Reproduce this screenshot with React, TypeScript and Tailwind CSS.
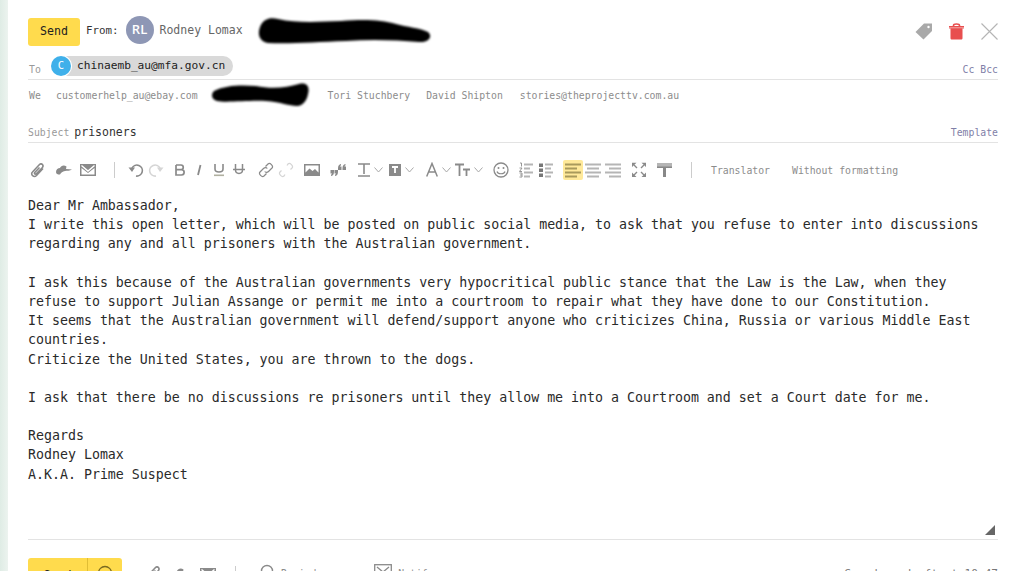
import React from "react";

const mono = { fontFamily: '"DejaVu Sans Mono", monospace' };

function I({ w = 16, className = "", children }: { w?: number; className?: string; children: React.ReactNode }) {
  return (
    <svg width={w} height={16} viewBox={`0 0 ${w} 16`} className={`shrink-0 ${className}`} fill="none">
      {children}
    </svg>
  );
}

const G = "#8a8a8a";
const L = "#b5b5b5";

function Chev({ className = "" }: { className?: string }) {
  return (
    <svg width={9} height={6} viewBox="0 0 9 6" className={`shrink-0 ${className}`} fill="none">
      <path d="M0.5 0.5 L4.5 5 L8.5 0.5" stroke="#a8a8a8" strokeWidth="1" />
    </svg>
  );
}

const Clip = () => (
  <path d="M14 6.5 L7.5 13.5 C5 16 1 12.5 3.5 10 L10.5 2.5 C12.5 0.5 15.5 3.5 13 6 L7.5 11.5 C6 13 4.8 11.5 6 10.2 L10.5 5.5" stroke={G} strokeWidth="1.6" />
);
const Cloud = () => (
  <path d="M0 10 C0 7.5 2 6 4 6 C5 3.5 8 2.5 10.5 4.5 L10 7 L16 7.5 C14 9 11 8.5 9 9 C6.5 9.5 5 10.5 4 12.5 C1.5 12.5 0 12 0 10 Z" fill={G} />
);
const Mail = () => (
  <>
    <rect x="0" y="2" width="16" height="12" fill={G} />
    <path d="M1.5 3.5 L8 9 L14.5 3.5" stroke="#fff" strokeWidth="1.4" />
    <path d="M1.5 6 L8 11 L14.5 6 V12.5 H1.5 Z" fill="#fff" />
  </>
);
const Lines = ({ x = 0, sizes, c = L }: { x?: number; sizes: [number, number][]; c?: string }) => (
  <>
    {sizes.map(([sx, w], i) => (
      <rect key={i} x={x + sx} y={1.5 + i * 4} width={w} height={2} fill={c} />
    ))}
  </>
);

const body = [
  "Dear Mr Ambassador,",
  "I write this open letter, which will be posted on public social media, to ask that you refuse to enter into discussions",
  "regarding any and all prisoners with the Australian government.",
  "",
  "I ask this because of the Australian governments very hypocritical public stance that the Law is the Law, when they",
  "refuse to support Julian Assange or permit me into a courtroom to repair what they have done to our Constitution.",
  "It seems that the Australian government will defend/support anyone who criticizes China, Russia or various Middle East",
  "countries.",
  "Criticize the United States, you are thrown to the dogs.",
  "",
  "I ask that there be no discussions re prisoners until they allow me into a Courtroom and set a Court date for me.",
  "",
  "Regards",
  "Rodney Lomax",
  "A.K.A. Prime Suspect",
];

export default function App() {
  return (
    <div className="flex h-[571px] w-[1009px] overflow-hidden bg-white" style={mono}>
      <div className="w-[8px] shrink-0 bg-gradient-to-r from-[#dfece5] to-[#ecf3ef]" />
      <div className="flex min-w-0 flex-1 flex-col pl-[20px] pr-[11px]">
        {/* From row */}
        <div className="mt-[16px] flex h-[30px] shrink-0 items-center">
          <div className="mt-[1px] flex h-[28px] w-[52px] items-center justify-center rounded-[3px] bg-[#ffdb4d] text-[11.6px] text-[#222]">
            Send
          </div>
          <span className="ml-[6px] text-[10.8px] text-[#333]">From:</span>
          <div
            className="mb-[2px] ml-[7px] flex h-[28px] w-[28px] items-center justify-center rounded-full bg-[#8e97b5] text-[13px] font-semibold text-white"
            style={{ fontFamily: '"Open Sans", sans-serif' }}
          >
            RL
          </div>
          <span className="ml-[6px] text-[11.5px] text-[#666]">Rodney Lomax</span>
          <svg width={178} height={30} viewBox="0 0 178 30" className="ml-[13px] shrink-0 blur-[0.8px]">
            <path
              d="M4 11 C7 3 14 1 22 3 C40 7 60 6 85 5 C110 3 125 4 140 8 C150 11 165 12 172 16 C177 20 173 27 163 26 C140 24 115 23 90 25 C60 26 35 28 12 27 C4 26 1 19 4 11 Z"
              fill="#000"
            />
          </svg>
          <div className="ml-auto flex items-center">
            <svg width={18} height={17} viewBox="0 0 18 17" className="shrink-0">
              <path d="M0.5 9 L9 0.5 H17 V8 L8.5 16.5 Z" fill="#a9a9a9" />
              <circle cx="13.5" cy="4" r="1.2" fill="#fff" />
            </svg>
            <svg width={15} height={17} viewBox="0 0 15 17" className="ml-[16px] shrink-0">
              <path d="M4.5 3 V2.5 C4.5 0.5 10.5 0.5 10.5 2.5 V3" stroke="#e84f4f" strokeWidth="1.6" fill="none" />
              <path d="M0 3 H15 V5.5 H13.5 V15 C13.5 16 13 16.5 12 16.5 H3 C2 16.5 1.5 16 1.5 15 V5.5 H0 Z" fill="#e84f4f" />
              <rect x="0" y="4.5" width="15" height="0.7" fill="#fff" opacity="0.7" />
            </svg>
            <svg width={17} height={17} viewBox="0 0 17 17" className="ml-[17px] shrink-0">
              <path d="M0.5 0.5 L16.5 16.5 M16.5 0.5 L0.5 16.5" stroke="#b5b5b5" strokeWidth="1.1" />
            </svg>
          </div>
        </div>

        {/* To row */}
        <div className="flex h-[34px] shrink-0 items-end border-b border-[#e3e3e3] pb-[3px]">
          <span className="mb-[-2px] ml-[1px] w-[22px] text-[9.8px] text-[#999]">To</span>
          <div className="flex h-[20px] items-center rounded-full bg-[#d9d9d9] pr-[8px]">
            <div className="flex h-[20px] w-[20px] items-center justify-center rounded-full bg-[#3fb0ea] text-[10.5px] text-white ring-1 ring-white">
              C
            </div>
            <span className="ml-[6px] text-[11.2px] text-[#222]">chinaemb_au@mfa.gov.cn</span>
          </div>
          <span className="mb-[-2px] ml-auto text-[9.8px] text-[#7f7fa8]">Cc Bcc</span>
        </div>

        {/* We row */}
        <div className="flex h-[30px] shrink-0 items-center text-[9.8px] text-[#8c8c8c]">
          <span className="ml-[1px] mt-[2px] w-[27px]">We</span>
          <span className="mt-[2px]">customerhelp_au@ebay.com</span>
          <svg width={100} height={26} viewBox="0 0 100 26" className="ml-[13px] shrink-0 blur-[0.8px]">
            <path
              d="M3 9 C15 3 30 3 45 4 C60 7 75 6 88 2 C96 0 99 5 97 12 C96 18 92 24 86 24 C78 24 70 20 55 19 C38 18 15 21 6 19 C0 17 0 12 3 9 Z"
              fill="#000"
            />
          </svg>
          <span className="ml-[17px] mt-[2px]">Tori Stuchbery</span>
          <span className="ml-[16px] mt-[2px]">David Shipton</span>
          <span className="ml-[17px] mt-[2px]">stories@theprojecttv.com.au</span>
        </div>

        {/* Subject row */}
        <div className="flex h-[33px] shrink-0 items-end justify-between border-b border-[#e3e3e3] pb-[1px]">
          <div className="flex items-baseline">
            <span className="text-[9.8px] text-[#999]">Subject</span>
            <span className="ml-[5px] text-[11.5px] text-[#333]">prisoners</span>
          </div>
          <span className="text-[9.8px] text-[#7f7fa8]">Template</span>
        </div>

        {/* Toolbar */}
        <div className="flex h-[52px] shrink-0 items-center pt-[2px]">
          <I className="ml-[1px]"><Clip /></I>
          <I className="ml-[11px]"><Cloud /></I>
          <I className="ml-[8px]"><Mail /></I>
          <div className="ml-[18px] h-[16px] w-px bg-[#ccc]" />
          <I className="ml-[13px]">
            <path d="M4 6 A5.5 5.5 0 1 1 8 14" stroke={G} strokeWidth="1.6" />
            <path d="M0.5 5.5 H7 L4 10 Z" fill={G} />
          </I>
          <I className="ml-[4px]">
            <path d="M12 6 A5.5 5.5 0 1 0 8 14" stroke="#d5d5d5" strokeWidth="1.6" />
            <path d="M15.5 5.5 H9 L12 10 Z" fill="#d5d5d5" />
          </I>
          <I w={12} className="ml-[10px]">
            <path d="M2 3 H7 C10 3 10 7.7 7 7.7 H2 M2 7.7 H7.5 C11 7.7 11 13 7.5 13 H2 V3" stroke={G} strokeWidth="1.7" />
          </I>
          <I w={8} className="ml-[9px]"><path d="M5.5 3 L3 13" stroke={G} strokeWidth="1.8" /></I>
          <I w={12} className="ml-[10px]">
            <path d="M2 2 V7 C2 11 10 11 10 7 V2" stroke={G} strokeWidth="1.6" />
            <rect x="1" y="12.5" width="10" height="1.6" fill="#b0b0a0" />
          </I>
          <I w={12} className="ml-[8px]">
            <path d="M2.5 2 V8 C2.5 12.5 9.5 12.5 9.5 8 V2 M0 7.5 H12" stroke={G} strokeWidth="1.5" />
          </I>
          <I className="ml-[13px]">
            <path d="M7.5 4.5 L10 2 C12 0.2 15.8 4 14 6 L10.5 9.5 C9 11 7.5 10.5 6.7 9.5 M8.5 11.5 L6 14 C4 15.8 0.2 12 2 10 L5.5 6.5 C7 5 8.5 5.5 9.3 6.5" stroke={G} strokeWidth="1.2" />
          </I>
          <I className="ml-[4px]">
            <path d="M9 3.5 L10 2 C12 0.2 15.8 4 14 6 L12.5 7.5 M7 12.5 L6 14 C4 15.8 0.2 12 2 10 L3.5 8.5" stroke="#d5d5d5" strokeWidth="1.2" />
          </I>
          <I className="ml-[10px]">
            <rect x="0" y="2" width="16" height="12" fill={G} />
            <rect x="1.5" y="3.5" width="13" height="7" fill="#fff" />
            <path d="M1.5 10.5 L5.5 6.5 L8.5 9 L11 7 L14.5 10.5 V12.5 H1.5 Z" fill={G} />
          </I>
          <I className="ml-[10px]">
            <path d="M8 6 C8 3 10 2 11 2 V3.5 C10.5 3.5 10 4 10 4.5 H11.5 V8 H8 Z M12.5 6 C12.5 3 14.5 2 15.5 2 V3.5 C15 3.5 14.5 4 14.5 4.5 H16 V8 H12.5 Z" fill={G} />
            <path d="M4 10 C4 13 2 14 1 14 V12.5 C1.5 12.5 2 12 2 11.5 H0.5 V8 H4 Z M8 10 C8 13 6 14 5 14 V12.5 C5.5 12.5 6 12 6 11.5 H4.5 V8 H8 Z" fill={G} />
          </I>
          <I w={14} className="ml-[11px]">
            <path d="M1 2 H13 M7 2 V12 M1 14 H13" stroke={G} strokeWidth="1.6" />
          </I>
          <Chev className="ml-[3px]" />
          <I w={12} className="ml-[6px]">
            <rect x="0" y="2" width="12" height="12" fill={G} />
            <path d="M3 5 H9 M6 5 V11" stroke="#fff" strokeWidth="1.8" />
          </I>
          <Chev className="ml-[4px]" />
          <I w={12} className="ml-[12px]">
            <path d="M0.7 14.5 L6 1.5 L11.3 14.5 M2.5 10 H9.5" stroke={G} strokeWidth="1.5" />
          </I>
          <Chev className="ml-[4px]" />
          <I className="ml-[4px]">
            <path d="M0 2.5 H9 M4.5 2.5 V14 M8 7.5 H15 M11.5 7.5 V14" stroke={G} strokeWidth="1.8" />
          </I>
          <Chev className="ml-[3px]" />
          <I className="ml-[10px]">
            <circle cx="8" cy="8" r="7" stroke={G} strokeWidth="1.3" />
            <circle cx="5.5" cy="6" r="1" fill={G} />
            <circle cx="10.5" cy="6" r="1" fill={G} />
            <path d="M4 9.5 C5 12.5 11 12.5 12 9.5" stroke={G} strokeWidth="1.2" />
          </I>
          <I w={14} className="ml-[10px]">
            <path d="M1 1 H2.5 V4.5 M0.5 6 H3 L0.5 9.5 H3 M0.5 11 H3 V15 H0.5 M1 13 H3" stroke={G} strokeWidth="0.9" />
            <Lines x={5} c={L} sizes={[[0, 9], [0, 6], [0, 9], [0, 6]]} />
          </I>
          <I w={14} className="ml-[6px]">
            <rect x="0" y="1.5" width="4" height="3.5" fill="#777" />
            <rect x="0" y="6.5" width="4" height="3.5" fill="#777" />
            <rect x="0" y="11.5" width="4" height="3.5" fill="#777" />
            <Lines x={6} c={L} sizes={[[0, 8], [0, 6], [0, 8], [0, 6]]} />
          </I>
          <div className="ml-[10px] flex h-[20px] w-[20px] shrink-0 items-center justify-center rounded-[2px] bg-[#ffe99a]">
            <I>
              <Lines c="#a99a5c" sizes={[[0, 16], [0, 12], [0, 16], [0, 12]]} />
            </I>
          </div>
          <I className="ml-[2px]">
            <Lines sizes={[[0, 16], [2, 12], [0, 16], [2, 12]]} />
          </I>
          <I className="ml-[4px]">
            <Lines sizes={[[0, 16], [4, 12], [0, 16], [4, 12]]} />
          </I>
          <I w={14} className="ml-[11px]">
            <path d="M0 5 V0.8 H4.5 Z M14 5 V0.8 H9.5 Z M0 10.5 V15 H4.5 Z M14 10.5 V15 H9.5 Z" fill={G} />
            <path d="M2 3 L5 6 M12 3 L9 6 M2 13 L5 10 M12 13 L9 10" stroke={G} strokeWidth="1.4" />
          </I>
          <I className="ml-[11px]">
            <rect x="0" y="1" width="15" height="4" fill={L} />
            <rect x="0" y="4.5" width="15" height="1.5" fill="#888" />
            <rect x="6" y="6" width="3" height="9" fill="#888" />
          </I>
          <div className="ml-[18px] h-[16px] w-px bg-[#ccc]" />
          <span className="ml-[19px] mt-[3px] text-[9.8px] text-[#8c8c8c]">Translator</span>
          <span className="ml-[22px] mt-[3px] text-[9.8px] text-[#8c8c8c]">Without formatting</span>
        </div>

        {/* Body */}
        <div className="relative flex-1 border-b border-[#e3e3e3] pt-[1px] text-[13.28px] leading-[19.2px] text-[#2a2a2a]">
          {body.map((l, i) => (
            <div key={i} className="h-[19.2px] whitespace-pre">
              {l}
            </div>
          ))}
          <svg width={10} height={10} viewBox="0 0 10 10" className="absolute bottom-[4px] right-[3px]">
            <path d="M10 0 V10 H0 Z" fill="#666" />
          </svg>
        </div>

        {/* Footer */}
        <div className="flex h-[31px] shrink-0 items-start pt-[18px]">
          <div className="flex h-[30px] w-[94px] shrink-0 items-start rounded-[3px] bg-[#ffdb4d]">
            <span className="mt-[9px] w-[59px] text-center text-[11.6px] text-[#222]">Send</span>
            <div className="h-full w-px bg-[#e0bd35]" />
            <svg width={16} height={16} viewBox="0 0 16 16" className="ml-[9px] mt-[7px]" fill="none">
              <circle cx="8" cy="8" r="6.5" stroke="#7a6a20" strokeWidth="1.3" />
            </svg>
          </div>
          <I className="ml-[23px] mt-[7px]"><Clip /></I>
          <I className="ml-[12px] mt-[7px]"><Cloud /></I>
          <I className="ml-[11px] mt-[8px]"><Mail /></I>
          <div className="ml-[19px] mt-[8px] h-[16px] w-px bg-[#ccc]" />
          <svg width={14} height={16} viewBox="0 0 14 16" className="ml-[24px] mt-[6px] shrink-0" fill="none">
            <circle cx="7" cy="7" r="5.5" stroke={G} strokeWidth="1.4" />
          </svg>
          <span className="ml-[7px] mt-[9px] text-[9.8px] text-[#8c8c8c]">Reminder</span>
          <svg width={18} height={14} viewBox="0 0 18 14" className="ml-[46px] mt-[6px] shrink-0" fill="none">
            <rect x="0.7" y="0.7" width="16.6" height="12" stroke={G} strokeWidth="1.3" />
            <path d="M3 3 L9 8 L15 3" stroke={G} strokeWidth="1.3" />
          </svg>
          <span className="ml-[6px] mt-[9px] text-[9.8px] text-[#8c8c8c]">Notify</span>
          <span className="ml-auto mt-[8px] text-[11.1px] text-[#777]">Saved as draft at 10:47</span>
        </div>
      </div>
    </div>
  );
}
